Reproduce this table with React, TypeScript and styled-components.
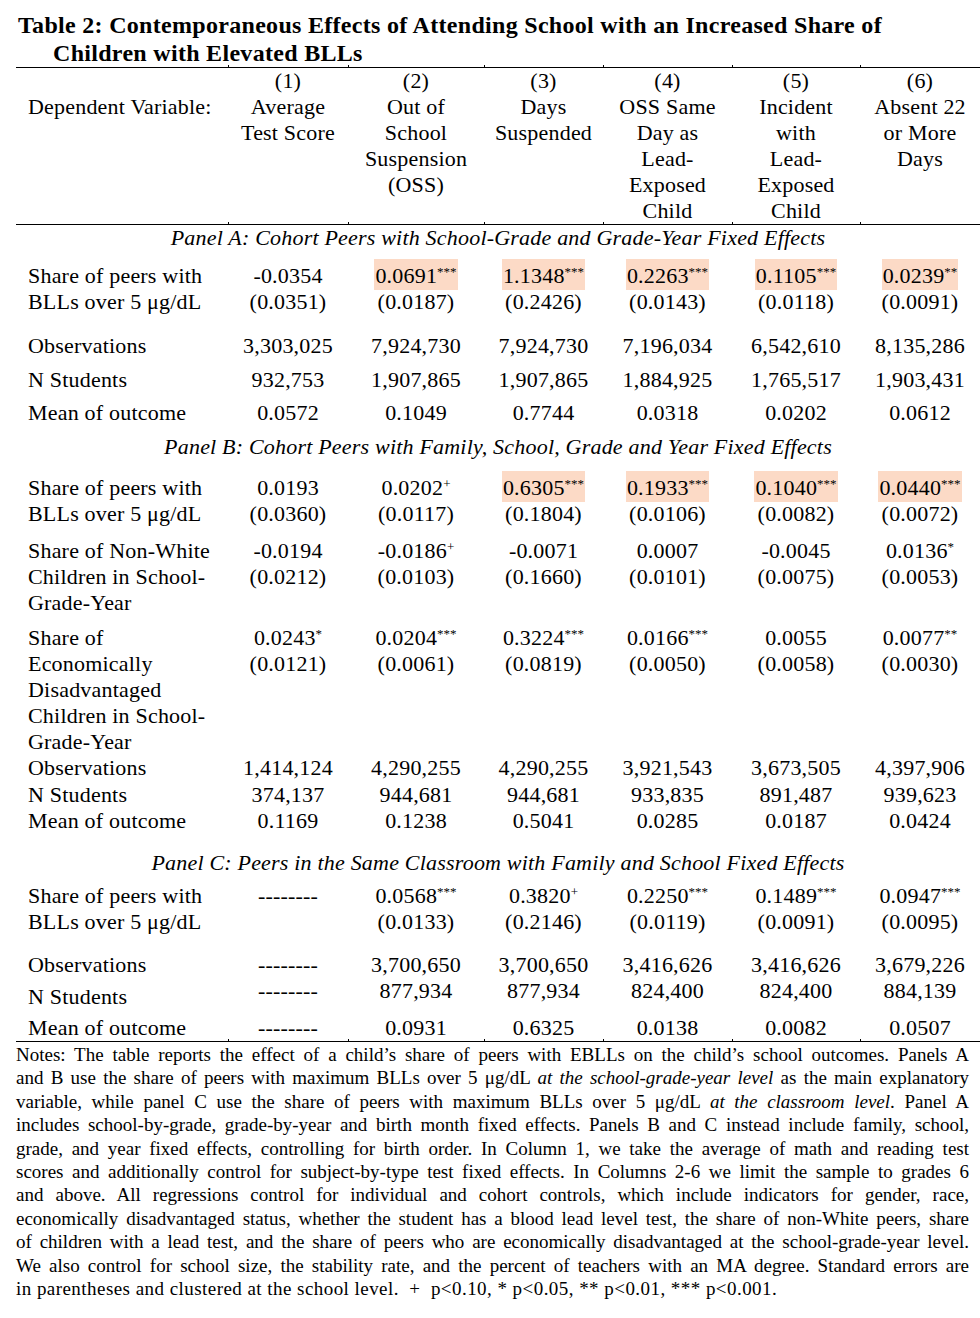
import * as React from "react";
import styled, { createGlobalStyle } from "styled-components";

const COLS = "212px 120px 136px 119px 129px 128px 120px";

const GlobalStyle = createGlobalStyle`
  html,
  body {
    background: #fff;
    margin: 0;
    padding: 0;
  }

  body {
    color: #000;
    font-family: "Liberation Serif", "Times New Roman", serif;
  }
`;

const Page = styled.div`
  box-sizing: border-box;
  padding: 11px 0 20px 16px;
  width: 980px;
`;

const Title = styled.h1`
  font-size: 24px;
  font-weight: bold;
  letter-spacing: 0.3px;
  line-height: 28px;
  margin: 0;
  padding-left: 37px;
  text-indent: -35px;
  white-space: nowrap;
`;

const Table = styled.div`
  font-size: 22px;
  letter-spacing: 0.2px;
  line-height: 26px;
  width: 964px;
`;

const RuleRow = styled.div`
  display: grid;
  grid-template-columns: ${COLS};
  margin-top: -2px;
`;

const Tick = styled.div<{ $first?: boolean }>`
  border-bottom: 1px solid #000;
  border-left: ${(p) => (p.$first ? "none" : "1px solid #000")};
  height: 2px;
`;

const Row = styled.div<{ $gap?: number }>`
  display: grid;
  grid-template-columns: ${COLS};
  padding-top: ${(p) => p.$gap ?? 0}px;
`;

const Label = styled.div<{ $offset?: number }>`
  padding-left: 12px;
  padding-top: ${(p) => p.$offset ?? 0}px;
  white-space: nowrap;
`;

const Value = styled.div`
  text-align: center;
  white-space: nowrap;
`;

const Coef = styled.span<{ $hl?: boolean }>`
  background: ${(p) => (p.$hl ? "#fcdac6" : "transparent")};
  display: inline-block;
  margin: -4px 0 -1px;
  padding: 4px 1px 1px;
`;

const Sup = styled.sup`
  font-size: 13px;
  letter-spacing: 0;
  line-height: 0;
  vertical-align: 7px;
`;

const PanelTitle = styled.div<{ $gap?: number }>`
  font-style: italic;
  padding-top: ${(p) => p.$gap ?? 0}px;
  text-align: center;
`;

const Notes = styled.div`
  font-size: 19px;
  line-height: 23.4px;
  padding-top: 1px;
  width: 953px;
`;

const NoteLine = styled.div<{ $last?: boolean }>`
  letter-spacing: ${(p) => (p.$last ? "0.45px" : "0")};
  text-align: justify;
  text-align-last: ${(p) => (p.$last ? "left" : "justify")};
`;

type Cell = { v: string; sig?: string; se?: string; hl?: boolean };
type DataRow = { kind: "row"; label: string[]; cells: Cell[]; gap: number; offset?: number };
type PanelRow = { kind: "panel"; text: string; gap: number };

const HEADERS = [
  ["(1)", "Average", "Test Score"],
  ["(2)", "Out of", "School", "Suspension", "(OSS)"],
  ["(3)", "Days", "Suspended"],
  ["(4)", "OSS Same", "Day as", "Lead-", "Exposed", "Child"],
  ["(5)", "Incident", "with", "Lead-", "Exposed", "Child"],
  ["(6)", "Absent 22", "or More", "Days"],
];

const SHARE = ["Share of peers with", "BLLs over 5 μg/dL"];
const plain = (vals: string[]): Cell[] => vals.map((v) => ({ v }));
const DASH = "--------";

const ROWS: (DataRow | PanelRow)[] = [
  { kind: "panel", text: "Panel A: Cohort Peers with School-Grade and Grade-Year Fixed Effects", gap: 0 },
  {
    kind: "row",
    label: SHARE,
    gap: 12,
    cells: [
      { v: "-0.0354", se: "(0.0351)" },
      { v: "0.0691", sig: "***", se: "(0.0187)", hl: true },
      { v: "1.1348", sig: "***", se: "(0.2426)", hl: true },
      { v: "0.2263", sig: "***", se: "(0.0143)", hl: true },
      { v: "0.1105", sig: "***", se: "(0.0118)", hl: true },
      { v: "0.0239", sig: "**", se: "(0.0091)", hl: true },
    ],
  },
  { kind: "row", label: ["Observations"], gap: 18, cells: plain(["3,303,025", "7,924,730", "7,924,730", "7,196,034", "6,542,610", "8,135,286"]) },
  { kind: "row", label: ["N Students"], gap: 8, cells: plain(["932,753", "1,907,865", "1,907,865", "1,884,925", "1,765,517", "1,903,431"]) },
  { kind: "row", label: ["Mean of outcome"], gap: 7, cells: plain(["0.0572", "0.1049", "0.7744", "0.0318", "0.0202", "0.0612"]) },
  { kind: "panel", text: "Panel B: Cohort Peers with Family, School, Grade and Year Fixed Effects", gap: 8 },
  {
    kind: "row",
    label: SHARE,
    gap: 15,
    cells: [
      { v: "0.0193", se: "(0.0360)" },
      { v: "0.0202", sig: "+", se: "(0.0117)" },
      { v: "0.6305", sig: "***", se: "(0.1804)", hl: true },
      { v: "0.1933", sig: "***", se: "(0.0106)", hl: true },
      { v: "0.1040", sig: "***", se: "(0.0082)", hl: true },
      { v: "0.0440", sig: "***", se: "(0.0072)", hl: true },
    ],
  },
  {
    kind: "row",
    label: ["Share of Non-White", "Children in School-", "Grade-Year"],
    gap: 11,
    cells: [
      { v: "-0.0194", se: "(0.0212)" },
      { v: "-0.0186", sig: "+", se: "(0.0103)" },
      { v: "-0.0071", se: "(0.1660)" },
      { v: "0.0007", se: "(0.0101)" },
      { v: "-0.0045", se: "(0.0075)" },
      { v: "0.0136", sig: "*", se: "(0.0053)" },
    ],
  },
  {
    kind: "row",
    label: ["Share of", "Economically", "Disadvantaged", "Children in School-", "Grade-Year"],
    gap: 9,
    cells: [
      { v: "0.0243", sig: "*", se: "(0.0121)" },
      { v: "0.0204", sig: "***", se: "(0.0061)" },
      { v: "0.3224", sig: "***", se: "(0.0819)" },
      { v: "0.0166", sig: "***", se: "(0.0050)" },
      { v: "0.0055", se: "(0.0058)" },
      { v: "0.0077", sig: "**", se: "(0.0030)" },
    ],
  },
  { kind: "row", label: ["Observations"], gap: 0, cells: plain(["1,414,124", "4,290,255", "4,290,255", "3,921,543", "3,673,505", "4,397,906"]) },
  { kind: "row", label: ["N Students"], gap: 1, cells: plain(["374,137", "944,681", "944,681", "933,835", "891,487", "939,623"]) },
  { kind: "row", label: ["Mean of outcome"], gap: 0, cells: plain(["0.1169", "0.1238", "0.5041", "0.0285", "0.0187", "0.0424"]) },
  { kind: "panel", text: "Panel C: Peers in the Same Classroom with Family and School Fixed Effects", gap: 16 },
  {
    kind: "row",
    label: SHARE,
    gap: 7,
    cells: [
      { v: DASH },
      { v: "0.0568", sig: "***", se: "(0.0133)" },
      { v: "0.3820", sig: "+", se: "(0.2146)" },
      { v: "0.2250", sig: "***", se: "(0.0119)" },
      { v: "0.1489", sig: "***", se: "(0.0091)" },
      { v: "0.0947", sig: "***", se: "(0.0095)" },
    ],
  },
  { kind: "row", label: ["Observations"], gap: 17, cells: plain([DASH, "3,700,650", "3,700,650", "3,416,626", "3,416,626", "3,679,226"]) },
  { kind: "row", label: ["N Students"], gap: 0, offset: 6, cells: plain([DASH, "877,934", "877,934", "824,400", "824,400", "884,139"]) },
  { kind: "row", label: ["Mean of outcome"], gap: 5, cells: plain([DASH, "0.0931", "0.6325", "0.0138", "0.0082", "0.0507"]) },
];

const NOTES: React.ReactNode[] = [
  "Notes: The table reports the effect of a child’s share of peers with EBLLs on the child’s school outcomes. Panels A",
  <>
    and B use the share of peers with maximum BLLs over 5 μg/dL <i>at the school-grade-year level</i> as the main explanatory
  </>,
  <>
    variable, while panel C use the share of peers with maximum BLLs over 5 μg/dL <i>at the classroom level</i>. Panel A
  </>,
  "includes school-by-grade, grade-by-year and birth month fixed effects. Panels B and C instead include family, school,",
  "grade, and year fixed effects, controlling for birth order. In Column 1, we take the average of math and reading test",
  "scores and additionally control for subject-by-type test fixed effects. In Columns 2-6 we limit the sample to grades 6",
  "and above. All regressions control for individual and cohort controls, which include indicators for gender, race,",
  "economically disadvantaged status, whether the student has a blood lead level test, the share of non-White peers, share",
  "of children with a lead test, and the share of peers who are economically disadvantaged at the school-grade-year level.",
  "We also control for school size, the stability rate, and the percent of teachers with an MA degree. Standard errors are",
  "in parentheses and clustered at the school level. \u00a0+ \u00a0p<0.10, * p<0.05, ** p<0.01, *** p<0.001.",
];

const Rule = () => (
  <RuleRow>
    {HEADERS.concat([[]]).map((_, i) => (
      <Tick key={i} $first={i === 0} />
    ))}
  </RuleRow>
);

const Lines = ({ lines }: { lines: string[] }) => (
  <>
    {lines.map((line, i) => (
      <React.Fragment key={i}>
        {i > 0 && <br />}
        {line}
      </React.Fragment>
    ))}
  </>
);

const ValueCell = ({ cell }: { cell: Cell }) => (
  <Value>
    <Coef $hl={cell.hl}>
      {cell.v}
      {cell.sig && <Sup>{cell.sig}</Sup>}
    </Coef>
    {cell.se && (
      <>
        <br />
        {cell.se}
      </>
    )}
  </Value>
);

export default function App() {
  return (
    <Page>
      <GlobalStyle />
      <Title>
        Table 2: Contemporaneous Effects of Attending School with an Increased Share of
        <br />
        Children with Elevated BLLs
      </Title>
      <Table>
        <Rule />
        <Row>
          <Label $offset={26}>Dependent Variable:</Label>
          {HEADERS.map((lines, i) => (
            <Value key={i}>
              <Lines lines={lines} />
            </Value>
          ))}
        </Row>
        <Rule />
        {ROWS.map((row, i) =>
          row.kind === "panel" ? (
            <PanelTitle key={i} $gap={row.gap}>
              {row.text}
            </PanelTitle>
          ) : (
            <Row key={i} $gap={row.gap}>
              <Label $offset={row.offset}>
                <Lines lines={row.label} />
              </Label>
              {row.cells.map((cell, j) => (
                <ValueCell key={j} cell={cell} />
              ))}
            </Row>
          ),
        )}
        <Rule />
      </Table>
      <Notes>
        {NOTES.map((line, i) => (
          <NoteLine key={i} $last={i === NOTES.length - 1}>
            {line}
          </NoteLine>
        ))}
      </Notes>
    </Page>
  );
}
